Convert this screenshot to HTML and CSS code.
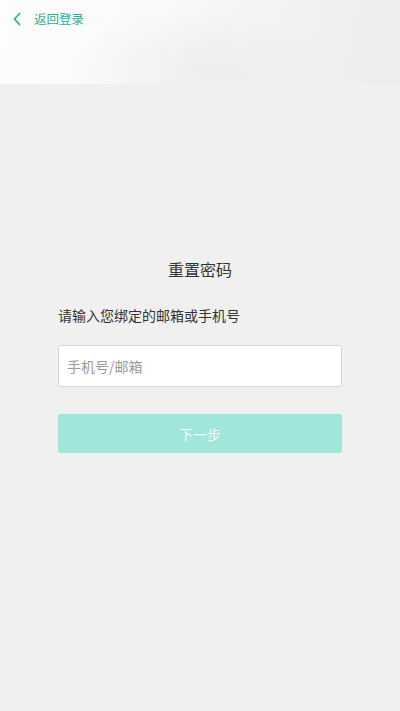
FILE: index.html
```html
<!DOCTYPE html>
<html lang="zh">
<head>
<meta charset="utf-8">
<link rel="stylesheet" href="styles.css">
</head>
<body>
<header class="top">
  <a class="back">
    <svg class="chev" width="10" height="14" viewBox="0 0 10 14"><path d="M7.5 1.5 L2.5 7 L7.5 12.5" fill="none" stroke="#2aae97" stroke-width="1.8" stroke-linecap="round" stroke-linejoin="round"/></svg>
    <span>返回登录</span>
  </a>
</header>
<main class="content">
  <h1 class="title">重置密码</h1>
  <p class="label">请输入您绑定的邮箱或手机号</p>
  <div class="input">手机号/邮箱</div>
  <div class="btn">下一步</div>
</main>
</body>
</html>
```

FILE: styles.css
```css
html, body {
  margin: 0;
  padding: 0;
}
body {
  width: 400px;
  height: 711px;
  background: #eff0ef;
  font-family: "Noto Sans CJK SC", "Noto Sans", sans-serif;
  overflow: hidden;
}
.top {
  height: 84px;
  background:
    radial-gradient(ellipse 140px 60px at 200px 70px, rgba(225,225,225,0.4), rgba(255,255,255,0)),
    linear-gradient(100deg, #fdfdfd 0%, #f9f9f9 40%, #f3f3f3 65%, #ececec 100%);
  box-sizing: border-box;
  padding: 10px 0 0 12px;
}
.back {
  display: flex;
  align-items: center;
  color: #2aae97;
  font-size: 12.5px;
  line-height: 18px;
}
.chev {
  display: block;
  margin-right: 12px;
}
.content {
  display: flex;
  flex-direction: column;
  padding: 0 58px;
}
.title {
  margin: 175px 0 0;
  text-align: center;
  font-weight: normal;
  font-size: 16px;
  line-height: 20px;
  color: #333;
}
.label {
  margin: 27px 0 0;
  font-size: 14px;
  line-height: 18px;
  color: #333;
}
.input {
  margin-top: 21px;
  height: 42px;
  box-sizing: border-box;
  background: #fff;
  border: 1px solid #d6d6d6;
  border-radius: 3px;
  padding: 0 8px;
  display: flex;
  align-items: center;
  font-size: 14px;
  color: #9a9a9a;
}
.btn {
  margin-top: 27px;
  height: 39px;
  background: #a0e6da;
  border-radius: 3px;
  display: flex;
  align-items: center;
  justify-content: center;
  color: #f2fbf9;
  font-size: 14px;
}
```
